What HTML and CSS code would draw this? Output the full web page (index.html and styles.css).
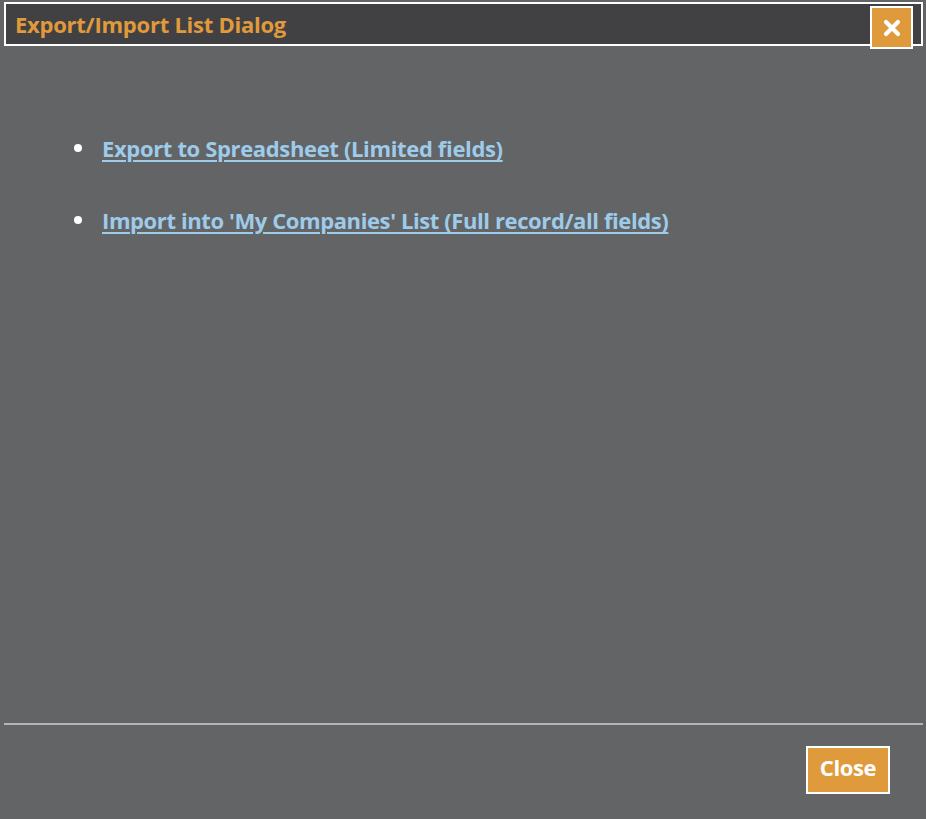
FILE: index.html
```html
<!DOCTYPE html>
<html>
<head>
<meta charset="utf-8">
<title>Export/Import List Dialog</title>
<link rel="stylesheet" href="styles.css">
</head>
<body>
<div class="dialog">
  <div class="titlebar">
    <span class="title">Export/Import List Dialog</span>
  </div>
  <button class="x-btn" aria-label="Close">
    <svg width="18" height="18" viewBox="0 0 18 18"><path d="M3 3 L15 15 M15 3 L3 15" stroke="#fff" stroke-width="4.2" stroke-linecap="round"/></svg>
  </button>
  <div class="content">
    <ul class="links">
      <li><a href="#">Export to Spreadsheet (Limited fields)</a></li>
      <li><a href="#" class="long">Import into 'My Companies' List (Full record/all fields)</a></li>
    </ul>
  </div>
  <div class="footer">
    <button class="close-btn">Close</button>
  </div>
</div>
</body>
</html>
```
FILE: styles.css
```css
html, body {
  margin: 0;
  padding: 0;
  height: 100%;
}
body {
  background: #636466;
  font-family: "Open Sans", "Lato", "Liberation Sans", sans-serif;
  font-weight: 700;
}
.dialog {
  position: relative;
  height: 100%;
  display: flex;
  flex-direction: column;
  box-sizing: border-box;
  padding: 2px 3px 0 4px;
}
.titlebar {
  height: 44px;
  box-sizing: border-box;
  border: 2px solid #ffffff;
  background: #414143;
  display: flex;
  align-items: center;
  padding-left: 9px;
}
.title {
  color: #e09a3b;
  font-size: 22px;
  letter-spacing: -0.25px;
}
.x-btn {
  position: absolute;
  top: 6px;
  left: 870px;
  width: 43px;
  height: 43px;
  box-sizing: border-box;
  border: 2px solid #ffffff;
  background: #df9b3b;
  padding: 0;
  display: flex;
  align-items: center;
  justify-content: center;
  cursor: pointer;
}
.content {
  flex: 1;
}
.links {
  margin: 88px 0 0 0;
  padding: 0 0 0 98px;
  list-style: none;
}
.links li {
  position: relative;
  font-size: 22px;
  line-height: 28px;
  margin-bottom: 44px;
}
.links li::before {
  content: "";
  position: absolute;
  left: -28px;
  top: 10px;
  width: 8px;
  height: 8px;
  border-radius: 50%;
  background: #ffffff;
}
.links a {
  color: #9dcbe9;
  text-decoration: underline;
  text-underline-offset: 3px;
  text-decoration-thickness: 2px;
  letter-spacing: -0.35px;
}
.links a.long {
  letter-spacing: -0.4px;
}
.footer {
  border-top: 2px solid #b4b4b6;
  height: 96px;
  box-sizing: border-box;
  display: flex;
  justify-content: flex-end;
  align-items: flex-start;
  padding: 21px 33px 0 0;
}
.close-btn {
  width: 84px;
  height: 48px;
  box-sizing: border-box;
  border: 2px solid #ffffff;
  background: #df9b3b;
  color: #ffffff;
  font-family: inherit;
  font-weight: 700;
  font-size: 22px;
  letter-spacing: -0.4px;
  padding: 0 0 6px 0;
  cursor: pointer;
}
```
